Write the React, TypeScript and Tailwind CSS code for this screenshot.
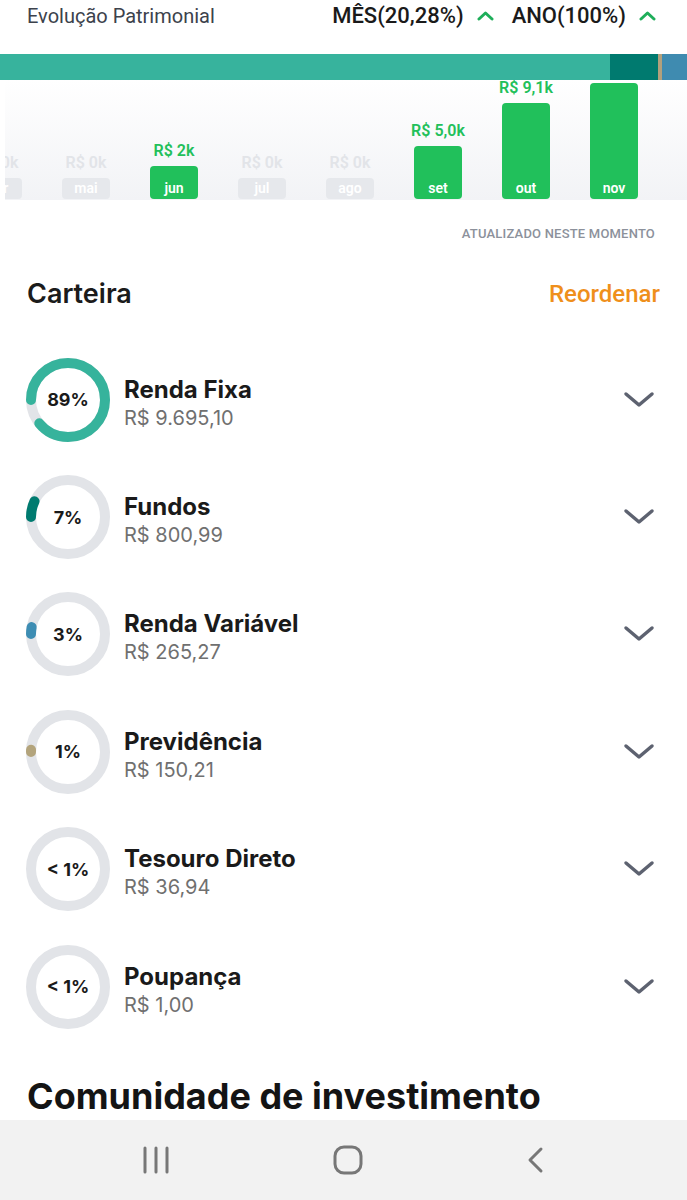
const months = [
  { label: 'abr', value: 'R$ 0k', h: 21, on: false },
  { label: 'mai', value: 'R$ 0k', h: 21, on: false },
  { label: 'jun', value: 'R$ 2k', h: 33, on: true },
  { label: 'jul', value: 'R$ 0k', h: 21, on: false },
  { label: 'ago', value: 'R$ 0k', h: 21, on: false },
  { label: 'set', value: 'R$ 5,0k', h: 53, on: true },
  { label: 'out', value: 'R$ 9,1k', h: 96, on: true },
  { label: 'nov', value: '', h: 116, on: true }
]

const wallet = [
  { name: 'Renda Fixa', amount: 'R$ 9.695,10', pct: '89%', share: 0.89, color: '#36b39c' },
  { name: 'Fundos', amount: 'R$ 800,99', pct: '7%', share: 0.07, color: '#007b70' },
  { name: 'Renda Variável', amount: 'R$ 265,27', pct: '3%', share: 0.03, color: '#3d8db3' },
  { name: 'Previdência', amount: 'R$ 150,21', pct: '1%', share: 0.01, color: '#b3a47c' },
  { name: 'Tesouro Direto', amount: 'R$ 36,94', pct: '< 1%', share: 0, color: '#36b39c' },
  { name: 'Poupança', amount: 'R$ 1,00', pct: '< 1%', share: 0, color: '#36b39c' }
]

const Caret = () => (
  <svg width="17" height="10" viewBox="0 0 17 10" className="ml-[13px]">
    <path d="M2 8 L8.5 2 L15 8" fill="none" stroke="#1fae5a" strokeWidth="3" strokeLinecap="round" strokeLinejoin="round" />
  </svg>
)

const Donut = ({ share, color, pct }: { share: number; color: string; pct: string }) => {
  const r = 37
  const c = 2 * Math.PI * r
  return (
    <div className="relative w-[86px] h-[86px] shrink-0">
      <svg width="86" height="86" viewBox="0 0 86 86">
        <circle cx="43" cy="43" r={r} fill="none" stroke="#e2e4e8" strokeWidth="10" />
        {share > 0 && (
          <circle
            cx="43"
            cy="43"
            r={r}
            fill="none"
            stroke={color}
            strokeWidth="10"
            strokeLinecap="round"
            strokeDasharray={`${share * c} ${c}`}
            transform="rotate(180 43 43)"
          />
        )}
      </svg>
      <span className="absolute inset-0 flex items-center justify-center text-[18px] font-bold text-[#1a1a1a]">{pct}</span>
    </div>
  )
}

const App = () => {
  return (
    <div className="w-[687px] h-[1200px] bg-white overflow-hidden relative" style={{ fontFamily: 'Inter, "Noto Sans", sans-serif' }}>
      {/* Header */}
      <div className="h-[54px] flex items-start justify-between pl-[27px] pr-[31px] pt-[2px] font-['Roboto',sans-serif]">
        <span className="text-[20px] leading-[28px] text-[#3c424c]">Evolução Patrimonial</span>
        <div className="flex items-center text-[22px] leading-[28px] font-medium text-[#1a1a1a]">
          <span>MÊS(20,28%)</span>
          <Caret />
          <span className="ml-[18px]">ANO(100%)</span>
          <Caret />
        </div>
      </div>

      {/* Allocation bar */}
      <div className="flex h-[26px]">
        <div className="w-[610px] bg-[#37b39d]" />
        <div className="w-[48px] bg-[#007a6f]" />
        <div className="w-[4px] bg-[#b3a07c]" />
        <div className="flex-1 bg-[#3f8bb0]" />
      </div>

      {/* Monthly chart */}
      <div className="ml-[5px] h-[120px] overflow-hidden bg-linear-to-b from-white to-[#f2f3f6] font-['Roboto',sans-serif]">
        <div className="flex items-end h-full -ml-[51px] pb-[1px]">
          {months.map((m) => (
            <div key={m.label} className="w-[88px] shrink-0 flex flex-col items-center justify-end">
              {m.value && (
                <span className={`text-[16px] leading-[16px] font-semibold mb-[7px] ${m.on ? 'text-[#22c05a]' : 'text-[#e2e4e8]'}`}>
                  {m.value}
                </span>
              )}
              <div
                className={`w-[48px] rounded-[4px] flex items-end justify-center pb-[1px] ${m.on ? 'bg-[#21c05b]' : 'bg-[#e6e8ec]'}`}
                style={{ height: m.h }}
              >
                <span className="text-[14px] leading-[20px] font-semibold text-white">{m.label}</span>
              </div>
            </div>
          ))}
        </div>
      </div>

      <div className="pt-[25px] pr-[32px] text-right text-[13px] leading-[18px] font-medium tracking-[0.2px] text-[#8c919b] font-['Roboto',sans-serif]">
        ATUALIZADO NESTE MOMENTO
      </div>

      {/* Carteira */}
      <div className="mt-[33px] h-[36px] flex items-center justify-between pl-[27px] pr-[27px]">
        <h2 className="text-[27px] font-semibold text-[#1b1b1b]">Carteira</h2>
        <button className="text-[24px] font-medium text-[#ef8f1b] font-['Roboto',sans-serif]">Reordenar</button>
      </div>

      <div className="mt-[29px]">
        {wallet.map((w) => (
          <div key={w.name} className="h-[117.4px] flex items-center pl-[25px] pr-[32px]">
            <Donut share={w.share} color={w.color} pct={w.pct} />
            <div className="ml-[13px] flex-1 flex flex-col pt-[8px]">
              <span className="text-[24px] leading-[28px] font-bold text-[#1a1a1a]">{w.name}</span>
              <span className="text-[20px] leading-[28px] text-[#707070]">{w.amount}</span>
            </div>
            <svg width="32" height="18" viewBox="0 0 32 18">
              <path d="M3 3 L16 14 L29 3" fill="none" stroke="#5d6270" strokeWidth="3.5" strokeLinecap="round" strokeLinejoin="round" />
            </svg>
          </div>
        ))}
      </div>

      <h2 className="mt-[30px] pl-[27px] text-[36px] leading-[42px] font-bold text-[#141414]">Comunidade de investimento</h2>

      {/* System navigation bar */}
      <div className="absolute bottom-0 left-0 right-0 h-[80px] bg-[#f2f2f2] flex items-center justify-center gap-[163px]">
        <svg width="28" height="28" viewBox="0 0 28 28">
          <path d="M3 2 V26 M14 2 V26 M25 2 V26" stroke="#777" strokeWidth="3" strokeLinecap="round" />
        </svg>
        <svg width="30" height="30" viewBox="0 0 30 30">
          <rect x="2" y="2" width="26" height="26" rx="9" fill="none" stroke="#777" strokeWidth="3" />
        </svg>
        <svg width="20" height="28" viewBox="0 0 20 28">
          <path d="M15 3 L4 14 L15 25" fill="none" stroke="#777" strokeWidth="3" strokeLinecap="round" strokeLinejoin="round" />
        </svg>
      </div>
    </div>
  )
}

export default App
